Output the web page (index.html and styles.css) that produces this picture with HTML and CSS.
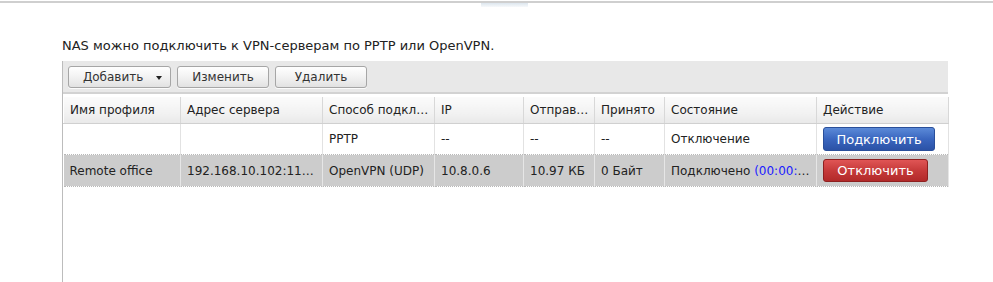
FILE: index.html
```html
<!DOCTYPE html>
<html>
<head>
  <meta charset="utf-8">
  <link rel="stylesheet" href="styles.css">
</head>
<body>
  <div class="top-line"><div class="top-tab"></div></div>
  <div class="content">
    <p class="intro">NAS можно подключить к VPN-серверам по PPTP или OpenVPN.</p>
    <div class="panel">
      <div class="toolbar">
        <button class="btn btn-menu">Добавить <span class="caret"></span></button>
        <button class="btn">Изменить</button>
        <button class="btn">Удалить</button>
      </div>
      <table class="grid">
        <colgroup>
          <col style="width:117px">
          <col style="width:142px">
          <col style="width:112px">
          <col style="width:89px">
          <col style="width:71px">
          <col style="width:70px">
          <col style="width:152px">
          <col style="width:132px">
        </colgroup>
        <thead>
          <tr>
            <th>Имя профиля</th>
            <th>Адрес сервера</th>
            <th>Способ подключения</th>
            <th>IP</th>
            <th>Отправлено</th>
            <th>Принято</th>
            <th>Состояние</th>
            <th>Действие</th>
          </tr>
        </thead>
        <tbody>
          <tr>
            <td></td>
            <td></td>
            <td>PPTP</td>
            <td>--</td>
            <td>--</td>
            <td>--</td>
            <td>Отключение</td>
            <td><button class="act act-connect">Подключить</button></td>
          </tr>
          <tr class="selected">
            <td>Remote office</td>
            <td class="addr">192.168.10.102:1194</td>
            <td>OpenVPN (UDP)</td>
            <td>10.8.0.6</td>
            <td>10.97 КБ</td>
            <td>0 Байт</td>
            <td>Подключено <span class="time">(00:00:12)</span></td>
            <td><button class="act act-disconnect">Отключить</button></td>
          </tr>
        </tbody>
      </table>
    </div>
  </div>
</body>
</html>
```

FILE: styles.css
```css
:root {
    --font-family: 'DejaVu Sans', Verdana, sans-serif;
    --text-color: #222;
}

html, body {
    height: 100%;
}

body {
    margin: 0;
    display: flex;
    flex-direction: column;
    font-family: var(--font-family);
    font-size: 12px;
    color: var(--text-color);
    background: #fff;
    overflow: hidden;
}

.top-line {
    flex: none;
    height: 6px;
    border-top: 2px solid #cfcfcf;
    margin-top: 1px;
    padding-left: 481px;
}

.top-tab {
    width: 47px;
    height: 4px;
    background: linear-gradient(#dde6ee, #f7f9fb);
}

.content {
    flex: 1;
    display: flex;
    flex-direction: column;
    padding-left: 62px;
    min-height: 0;
}

.intro {
    margin: 29px 0 7px 0;
    font-size: 13px;
    line-height: 16px;
}

.panel {
    flex: 1;
    width: 885px;
    border-left: 1px solid #bcbcbc;
}

.toolbar {
    display: flex;
    gap: 6px;
    padding: 5px 6px 4px 5px;
    background: #e8e8e8;
    border-bottom: 2px solid #d2d2d2;
    margin-bottom: 3px;
}

.btn {
    width: 92px;
    height: 22px;
    padding: 0;
    font-family: var(--font-family);
    font-size: 12px;
    color: #333;
    border: 1px solid #a6a6a6;
    border-radius: 3px;
    background: linear-gradient(#ffffff, #f2f2f2 50%, #e2e2e2);
    box-shadow: 0 1px 0 rgba(255, 255, 255, 0.8);
}

.btn-menu {
    width: 103px;
    padding-left: 6px;
}

.caret {
    display: inline-block;
    margin-left: 9px;
    vertical-align: middle;
    border-left: 3px solid transparent;
    border-right: 3px solid transparent;
    border-top: 4px solid #222;
}

.grid {
    width: 885px;
    table-layout: fixed;
    border-collapse: collapse;
}

.grid th,
.grid td {
    text-align: left;
    padding: 0 3px 0 6px;
    white-space: nowrap;
    overflow: hidden;
    text-overflow: ellipsis;
    font-size: 12px;
}

.grid td.addr {
    padding-right: 8px;
}

.grid th {
    height: 26px;
    font-weight: normal;
    background: linear-gradient(#fbfbfb, #f2f2f2 60%, #e9e9e9);
    border-right: 1px solid #d8d8d8;
    border-left: 1px solid #ffffff;
    border-bottom: 1px solid #d0d0d0;
}

.grid td {
    height: 30px;
    border-right: 1px solid #e2e2e2;
    border-bottom: 1px dotted #b8b8b8;
}

.grid tr.selected td {
    height: 31px;
    background: #cccccc;
    border-right-color: #e6e6e6;
}

.time {
    color: #1a1aff;
}

.act {
    font-family: var(--font-family);
    font-size: 13px;
    color: #fff;
    border-radius: 3px;
    cursor: pointer;
}

.act-connect {
    width: 112px;
    height: 24px;
    border: 1px solid #2a4f9a;
    background: linear-gradient(#5b8ad8, #3a66bf 50%, #2b52a6);
}

.act-disconnect {
    width: 105px;
    height: 23px;
    border: 1px solid #8e2020;
    background: linear-gradient(#e05555, #c63a3a 50%, #b22a2a);
}
```
